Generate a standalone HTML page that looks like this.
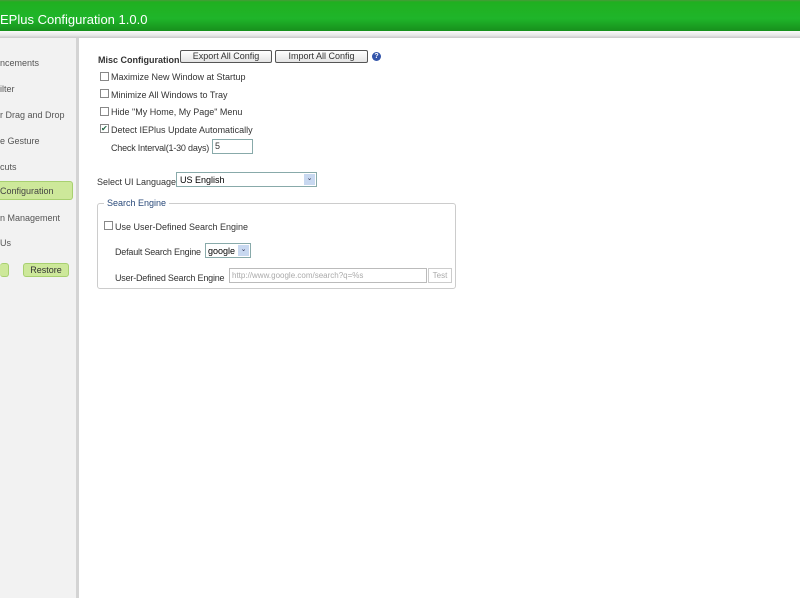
<!DOCTYPE html>
<html><head><style>
*{margin:0;padding:0;box-sizing:border-box}
body{width:800px;height:600px;overflow:hidden;background:#fff;font-family:"Liberation Sans",Arial,sans-serif;font-size:9px;color:#333;position:relative}
.top{position:absolute;left:0;top:0;width:800px;height:31px;background:linear-gradient(#4a9a3a 0,#20b020 2px,#1fb52a 60%,#178f1c 100%)}
.top span{position:absolute;left:0;top:12px;color:#fff;font-size:13px}
.strip{position:absolute;left:0;top:31px;width:800px;height:7px;background:linear-gradient(#fafafa,#e8e8e8 60%,#c8c8c8)}
.side{position:absolute;left:0;top:38px;width:79px;height:560px;background:#f2f2f2;border-right:3px solid #d4d4d4}
.side div{position:absolute;left:0;font-size:9px;color:#555}
.sel{left:0;top:143px;width:73px;height:19px;background:#cde89a;border:1px solid #a8d070;border-left:none;border-radius:0 3px 3px 0}
.t{position:absolute;white-space:nowrap}
.cb{position:absolute;width:9px;height:9px;border:1px solid #888;background:#fff}
.btn{position:absolute;height:13px;border:1px solid #555;border-radius:2px;background:linear-gradient(#fff,#e4e4e4);font-size:9px;text-align:center;line-height:11px}
.inp{position:absolute;border:1px solid #8aa;background:#fff}
.gbtn{position:absolute;height:14px;background:#cde89a;border:1px solid #a8d070;border-radius:3px;font-size:9px;text-align:center;line-height:12px}
</style></head><body>
<div class="top"><span>EPlus Configuration 1.0.0</span></div>
<div class="strip"></div>
<div class="side">
<div style="top:20px">ncements</div>
<div style="top:46px">ilter</div>
<div style="top:72px">r Drag and Drop</div>
<div style="top:98px">e Gesture</div>
<div style="top:124px">cuts</div>
<div class="sel" style="padding:4px 0 0 0;color:#444">Configuration</div>
<div style="top:175px">n Management</div>
<div style="top:200px">Us</div>
</div>
<div class="gbtn" style="left:0;top:263px;width:9px;border-left:none"></div>
<div class="gbtn" style="left:23px;top:263px;width:46px">Restore</div>
<div class="t" style="left:98px;top:55px;font-weight:bold">Misc Configuration</div>
<div class="btn" style="left:180px;top:50px;width:92px">Export All Config</div>
<div class="btn" style="left:275px;top:50px;width:93px">Import All Config</div>
<div style="position:absolute;left:372px;top:52px;width:9px;height:9px;border-radius:50%;background:#3355aa;color:#fff;font-size:7px;text-align:center;line-height:9px;font-weight:bold">?</div>
<div class="cb" style="left:100px;top:72px"></div><div class="t" style="left:111px;top:72px">Maximize New Window at Startup</div>
<div class="cb" style="left:100px;top:89px"></div><div class="t" style="left:111px;top:90px">Minimize All Windows to Tray</div>
<div class="cb" style="left:100px;top:107px"></div><div class="t" style="left:111px;top:107px">Hide "My Home, My Page" Menu</div>
<div class="cb" style="left:100px;top:124px;font-size:8px;line-height:7px;color:#264">✔</div><div class="t" style="left:111px;top:125px">Detect IEPlus Update Automatically</div>
<div class="t" style="left:111px;top:143px;letter-spacing:-0.2px">Check Interval(1-30 days)</div>
<div class="inp" style="left:212px;top:139px;width:41px;height:15px;padding:1px 2px;font-size:9px">5</div>
<div class="t" style="left:97px;top:177px">Select UI Language</div>
<div class="inp" style="left:176px;top:172px;width:141px;height:15px;padding:2px 3px;font-size:9px;color:#000">US English<span style="position:absolute;right:1px;top:1px;width:11px;height:11px;background:#c8d8f0;font-size:7px;text-align:center;color:#335">⌄</span></div>
<div style="position:absolute;left:97px;top:203px;width:359px;height:86px;border:1px solid #ccc;border-radius:3px"></div>
<div class="t" style="left:104px;top:198px;background:#fff;padding:0 3px;color:#2a4a7a">Search Engine</div>
<div class="cb" style="left:104px;top:221px"></div><div class="t" style="left:115px;top:222px">Use User-Defined Search Engine</div>
<div class="t" style="left:115px;top:247px;letter-spacing:-0.2px">Default Search Engine</div>
<div class="inp" style="left:205px;top:243px;width:46px;height:15px;padding:2px 2px;font-size:9px;color:#000">google<span style="position:absolute;right:1px;top:1px;width:11px;height:11px;background:#c8d8f0;font-size:7px;text-align:center;color:#335">⌄</span></div>
<div class="t" style="left:115px;top:273px;letter-spacing:-0.2px">User-Defined Search Engine</div>
<div class="inp" style="left:229px;top:268px;width:198px;height:15px;border-color:#bbb;padding:2px 2px;color:#aaa;font-size:8px">http://www.google.com/search?q=%s</div>
<div class="inp" style="left:428px;top:268px;width:24px;height:15px;border-color:#ccc;color:#aaa;font-size:8px;text-align:center;line-height:13px">Test</div>
</body></html>
